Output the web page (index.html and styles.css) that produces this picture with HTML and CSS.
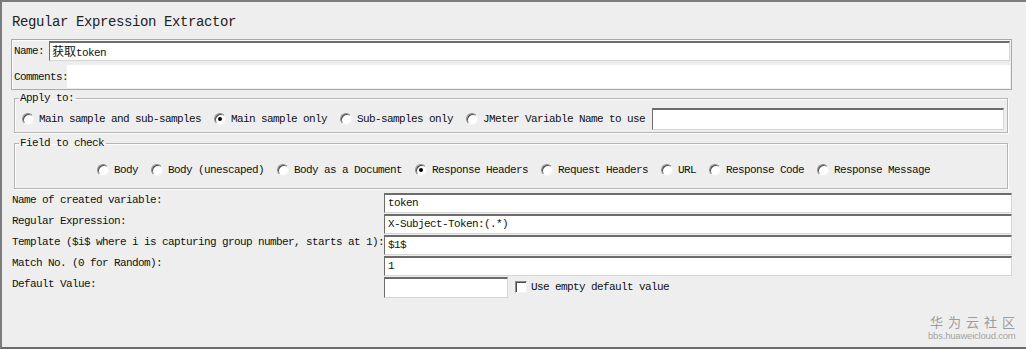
FILE: index.html
```html
<!DOCTYPE html>
<html>
<head>
<meta charset="utf-8">
<link rel="stylesheet" href="styles.css">
</head>
<body>
<div class="frame">
  <div class="title">Regular Expression Extractor</div>

  <div class="name-panel">
    <div class="np-row">
      <span class="np-label">Name:</span>
      <div class="field name-field"><span class="cjk">获取</span>token</div>
    </div>
    <div class="np-row comments-row">
      <span class="np-label">Comments:</span>
      <div class="plain-field"></div>
    </div>
  </div>

  <fieldset class="group apply-group">
    <legend class="group-title">Apply to:</legend>
    <div class="radio-row">
      <label class="opt"><span class="radio"></span>Main sample and sub-samples</label>
      <label class="opt"><span class="radio checked"></span>Main sample only</label>
      <label class="opt"><span class="radio"></span>Sub-samples only</label>
      <label class="opt"><span class="radio"></span>JMeter Variable Name to use</label>
      <div class="field var-field"></div>
    </div>
  </fieldset>

  <fieldset class="group check-group">
    <legend class="group-title">Field to check</legend>
    <div class="radio-row centered">
      <label class="opt"><span class="radio"></span>Body</label>
      <label class="opt"><span class="radio"></span>Body (unescaped)</label>
      <label class="opt"><span class="radio"></span>Body as a Document</label>
      <label class="opt"><span class="radio checked"></span>Response Headers</label>
      <label class="opt"><span class="radio"></span>Request Headers</label>
      <label class="opt"><span class="radio"></span>URL</label>
      <label class="opt"><span class="radio"></span>Response Code</label>
      <label class="opt"><span class="radio"></span>Response Message</label>
    </div>
  </fieldset>

  <div class="form-grid">
    <span class="f-label">Name of created variable:</span>
    <div class="field">token</div>
    <span class="f-label">Regular Expression:</span>
    <div class="field">X-Subject-Token:(.*)</div>
    <span class="f-label">Template ($i$ where i is capturing group number, starts at 1):</span>
    <div class="field">$1$</div>
    <span class="f-label">Match No. (0 for Random):</span>
    <div class="field">1</div>
    <span class="f-label">Default Value:</span>
    <div class="default-row">
      <div class="field default-field"></div>
      <span class="checkbox"></span>
      <span class="cb-text">Use empty default value</span>
    </div>
  </div>

  <div class="watermark">
    <div class="wm-cn">华为云社区</div>
    <div class="wm-en">bbs.huaweicloud.com</div>
  </div>
</div>
</body>
</html>
```

FILE: styles.css
```css
html, body {
  margin: 0;
  padding: 0;
  background: #eeeeee;
}

.frame {
  position: relative;
  box-sizing: border-box;
  width: 1026px;
  height: 349px;
  background: #eeeeee;
  border-top: 2px solid #7c7c7c;
  border-left: 2px solid #7c7c7c;
  border-bottom: 2px solid #6c6c6c;
  padding: 10px 14px 0 9px;
  font-family: "Liberation Mono", "Noto Sans CJK SC", monospace;
  font-size: 11px;
  letter-spacing: -0.6px;
  color: #111;
  overflow: hidden;
}

.title {
  height: 20px;
  line-height: 20px;
  padding-left: 1px;
  font-size: 14px;
  letter-spacing: -0.4px;
  color: #222;
}

.name-panel {
  margin-top: 7px;
  border: 1px solid #a9a9a9;
  box-shadow: inset 1px 1px 0 #fbfbfb;
  padding: 1px 1px 0 2px;
  height: 48px;
}

.np-row {
  display: flex;
  align-items: center;
  height: 20px;
}

.np-label {
  width: 35px;
  flex: none;
}

.comments-row {
  margin-top: 4px;
  height: 23px;
}

.comments-row .np-label {
  width: 53px;
}

.field {
  box-sizing: border-box;
  height: 20px;
  line-height: 16px;
  background: #fff;
  border-top: 2px solid #6c6c6c;
  border-left: 1px solid #6c6c6c;
  border-right: 1px solid #d6d6d6;
  border-bottom: 1px solid #d6d6d6;
  padding-left: 3px;
  white-space: nowrap;
  overflow: hidden;
}

.name-field {
  flex: 1;
  padding-left: 2px;
}

.cjk {
  font-family: "Noto Sans CJK SC", sans-serif;
  font-size: 12px;
  letter-spacing: 0;
}

.plain-field {
  flex: 1;
  height: 23px;
  background: #fff;
}

.group {
  margin: 2px 0 0 3px;
  width: 994px;
  box-sizing: border-box;
  border: 1px solid #b4b4b4;
  box-shadow: inset 1px 1px 0 #fdfdfd, 1px 1px 0 #fdfdfd;
  padding: 4px 2px 2px 7px;
  min-width: 0;
}

.group-title {
  padding: 0 2px 0 1px;
  margin-left: -3px;
  line-height: 12px;
  height: 12px;
}

.check-group {
  margin-top: 4px;
  padding: 13px 2px 10px 7px;
}

.radio-row {
  display: flex;
  align-items: center;
  height: 22px;
  gap: 13px;
}

.check-group .radio-row {
  height: 16px;
}

.radio-row.centered {
  justify-content: center;
}

.opt {
  display: flex;
  align-items: center;
  white-space: nowrap;
}

.radio {
  position: relative;
  box-sizing: border-box;
  width: 12px;
  height: 12px;
  margin-right: 5px;
  border-radius: 50%;
  background: #fff;
  border: 1px solid;
  border-color: #8c8c8c #f4f4f4 #f4f4f4 #8c8c8c;
  box-shadow: inset 1px 1px 0 #4a4a4a;
}

.radio.checked::after {
  content: "";
  position: absolute;
  left: 3px;
  top: 3px;
  width: 4px;
  height: 4px;
  border-radius: 50%;
  background: #000;
}

.var-field {
  flex: 1;
  height: 22px;
  margin-left: -6px;
  margin-right: 1px;
}

.form-grid {
  margin-top: 4px;
  display: grid;
  grid-template-columns: 373px 1fr;
  grid-auto-rows: 20px;
  row-gap: 1px;
}

.f-label {
  align-self: start;
  line-height: 14px;
  padding-left: 1px;
  white-space: nowrap;
}

.default-row {
  display: flex;
  align-items: center;
}

.default-field {
  width: 124px;
  flex: none;
  height: 21px;
}

.checkbox {
  box-sizing: border-box;
  width: 12px;
  height: 12px;
  margin-left: 7px;
  margin-right: 4px;
  background: #fff;
  border: 1px solid;
  border-color: #8c8c8c #f4f4f4 #f4f4f4 #8c8c8c;
  box-shadow: inset 1px 1px 0 #4a4a4a;
}

.cb-text {
  white-space: nowrap;
}

.watermark {
  position: absolute;
  left: 926px;
  top: 311px;
  color: #9c9c9c;
  letter-spacing: 0;
}

.wm-cn {
  font-family: "Noto Sans CJK SC", sans-serif;
  font-size: 13px;
  line-height: 17px;
  letter-spacing: 5px;
  padding-left: 2px;
}

.wm-en {
  font-family: "Liberation Sans", Arial, sans-serif;
  font-size: 9.5px;
  line-height: 11px;
  color: #a4a4a4;
  letter-spacing: -0.2px;
}
```
